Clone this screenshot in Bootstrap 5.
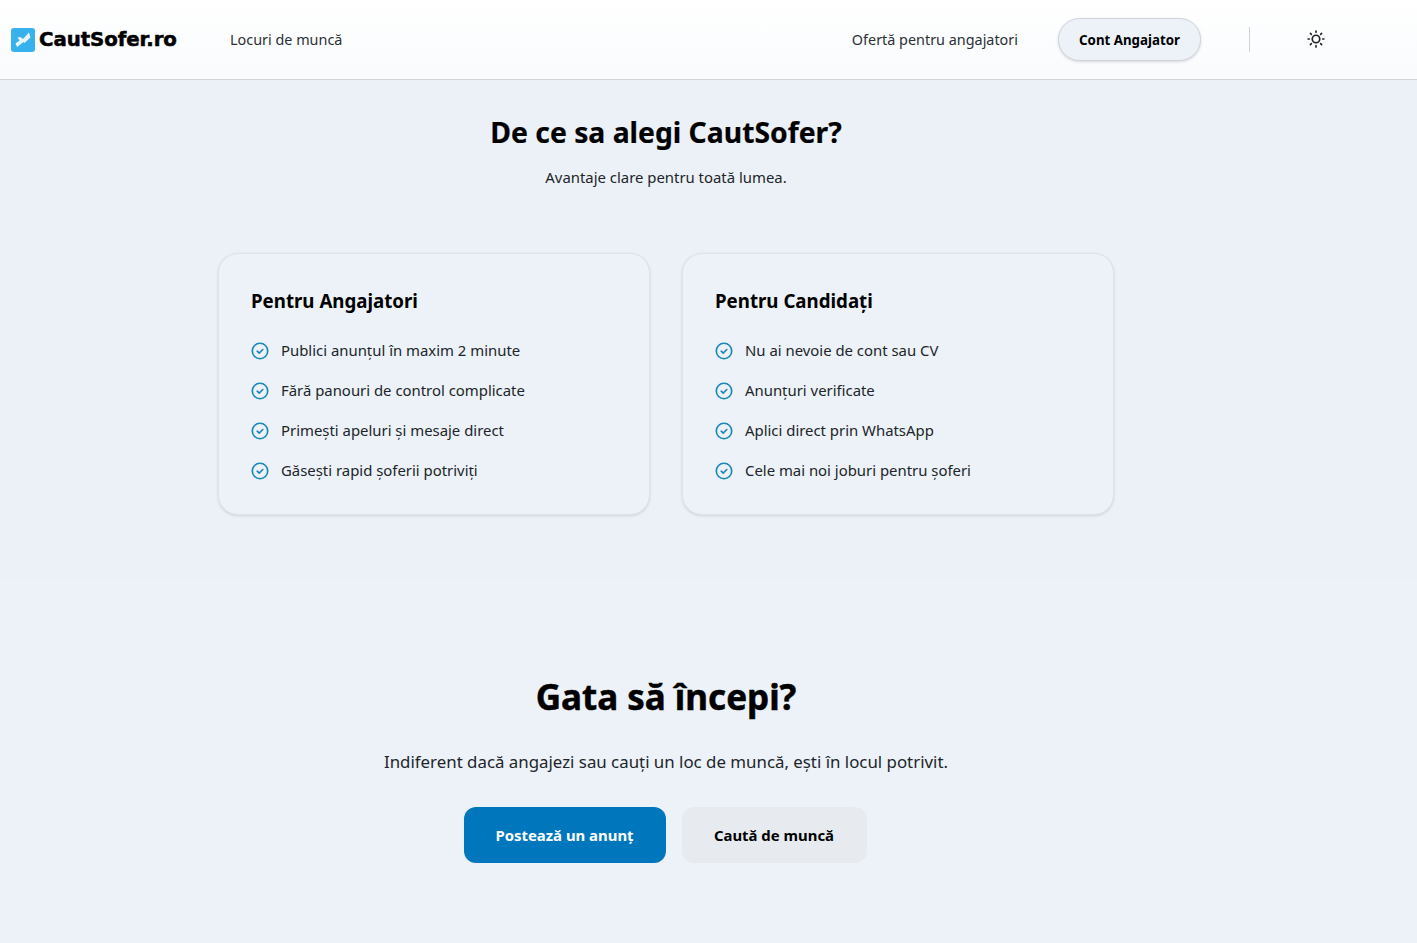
<!doctype html>
<html lang="ro">
<head>
<meta charset="utf-8">
<link href="https://cdn.jsdelivr.net/npm/bootstrap@5.3.0/dist/css/bootstrap.min.css" rel="stylesheet">
<style>
body{font-family:"Noto Sans","Open Sans",sans-serif;background:#ecf2f8;color:#212529;min-height:943px}
.top-bar{height:80px;background:linear-gradient(#fff,#f9fbfd);border-bottom:1px solid #d0d5da;padding:0 0 0 11px}
.brand-box{gap:4px;width:219px}
.brand-text{font-family:"DejaVu Sans",sans-serif;font-weight:700;font-size:19.8px;color:#000;-webkit-text-stroke:.5px #000;white-space:nowrap;letter-spacing:-.1px}
.nav-text{font-size:14.4px;color:#2b3035;text-decoration:none}
.acct-btn{width:143px;height:43px;border-radius:22px;background:#ecf2f8;border:1px solid #ced4da;box-shadow:0 1px 3px rgba(0,0,0,.15);font-size:13.3px;font-weight:700;color:#000;margin-left:40px;padding-top:3px}
.v-sep{width:1px;height:25px;background:#ced4da;margin:0 56px 0 48px}
.sun-wrap{margin-right:91px;line-height:0;margin-top:-2px}
.why-zone{height:500px;background:#ecf1f7;padding:32px 85px 0 0}
.why-title{font-size:28.3px;font-weight:700;color:#000;line-height:40px;margin:0;-webkit-text-stroke:.2px #000}
.why-sub{font-size:14.9px;line-height:21px;margin:15px 0 0;color:#212529}
.cards-row{gap:32px;margin-top:65px}
.benefit-card{width:432px;height:262px;background:#ecf2f8;border:1px solid #dfe3e8;border-radius:20px;box-shadow:0 1px 3px rgba(0,0,0,.12);padding:32px}
.benefit-title{font-size:18.7px;font-weight:700;color:#000;line-height:30px;margin:0 0 22px}
.benefit-list{gap:16px}
.benefit-item{gap:12px;height:24px;font-size:14.9px;color:#212529}
.benefit-item svg{margin-top:2px}
.cta-zone{height:363px;background:#ecf2f8;padding:94px 85px 0 0}
.cta-title{font-size:35px;font-weight:700;color:#000;line-height:46px;margin:0;-webkit-text-stroke:.5px #000}
.cta-sub{font-size:16.85px;line-height:26px;margin:29px 0 0;color:#212529}
.cta-btns{gap:16px;margin-top:32px;padding-right:2px}
.cta-main,.cta-alt{height:56px;border-radius:12px;border:0;font-size:14.9px;font-weight:700}
.cta-main{width:202px;background:#0077bd;color:#fff}
.cta-alt{width:185px;background:#e7ebf0;color:#000}
</style>
</head>
<body>
<header class="top-bar d-flex align-items-center">
  <div class="brand-box d-flex align-items-center">
    <svg width="24" height="24" viewBox="0 0 24 24"><rect width="24" height="24" rx="3" fill="#38b2ec"/><path d="M6 19l-1.500-3.500 4-3-2-3 3-.5 2.500 2 6-6.500 1.500 5-6 5.500-1-1z" fill="#e8f6fd"/></svg>
    <span class="brand-text">CautSofer.ro</span>
  </div>
  <a class="nav-text" href="#">Locuri de muncă</a>
  <a class="nav-text ms-auto" href="#">Ofertă pentru angajatori</a>
  <button class="acct-btn" type="button">Cont Angajator</button>
  <span class="v-sep"></span>
  <span class="sun-wrap">
    <svg width="20" height="20" viewBox="0 0 24 24" fill="none" stroke="#212529" stroke-width="2" stroke-linecap="round"><circle cx="12" cy="12" r="4.500"/><path d="M12 2.500v1.500M12 20v1.500M2.500 12h1.500M20 12h1.500M5.300 5.300l1.100 1.100M17.600 17.600l1.100 1.100M5.300 18.700l1.100-1.100M17.600 6.400l1.100-1.100"/></svg>
  </span>
</header>
<section class="why-zone text-center">
  <h2 class="why-title">De ce sa alegi CautSofer?</h2>
  <p class="why-sub">Avantaje clare pentru toată lumea.</p>
  <div class="cards-row d-flex justify-content-center text-start">
    <div class="benefit-card">
      <h3 class="benefit-title">Pentru Angajatori</h3>
      <div class="benefit-list d-flex flex-column">
        <div class="benefit-item d-flex align-items-center"><svg width="18" height="18" viewBox="0 0 18 18" fill="none" stroke="#1a85bd" stroke-width="1.6" stroke-linecap="round" stroke-linejoin="round"><circle cx="9" cy="9" r="7.700"/><path d="M6.200 9.200l2 1.900 3.600-3.600"/></svg>Publici anunțul în maxim 2 minute</div>
        <div class="benefit-item d-flex align-items-center"><svg width="18" height="18" viewBox="0 0 18 18" fill="none" stroke="#1a85bd" stroke-width="1.6" stroke-linecap="round" stroke-linejoin="round"><circle cx="9" cy="9" r="7.700"/><path d="M6.200 9.200l2 1.900 3.600-3.600"/></svg>Fără panouri de control complicate</div>
        <div class="benefit-item d-flex align-items-center"><svg width="18" height="18" viewBox="0 0 18 18" fill="none" stroke="#1a85bd" stroke-width="1.6" stroke-linecap="round" stroke-linejoin="round"><circle cx="9" cy="9" r="7.700"/><path d="M6.200 9.200l2 1.900 3.600-3.600"/></svg>Primești apeluri și mesaje direct</div>
        <div class="benefit-item d-flex align-items-center"><svg width="18" height="18" viewBox="0 0 18 18" fill="none" stroke="#1a85bd" stroke-width="1.6" stroke-linecap="round" stroke-linejoin="round"><circle cx="9" cy="9" r="7.700"/><path d="M6.200 9.200l2 1.900 3.600-3.600"/></svg>Găsești rapid șoferii potriviți</div>
      </div>
    </div>
    <div class="benefit-card">
      <h3 class="benefit-title">Pentru Candidați</h3>
      <div class="benefit-list d-flex flex-column">
        <div class="benefit-item d-flex align-items-center"><svg width="18" height="18" viewBox="0 0 18 18" fill="none" stroke="#1a85bd" stroke-width="1.6" stroke-linecap="round" stroke-linejoin="round"><circle cx="9" cy="9" r="7.700"/><path d="M6.200 9.200l2 1.900 3.600-3.600"/></svg>Nu ai nevoie de cont sau CV</div>
        <div class="benefit-item d-flex align-items-center"><svg width="18" height="18" viewBox="0 0 18 18" fill="none" stroke="#1a85bd" stroke-width="1.6" stroke-linecap="round" stroke-linejoin="round"><circle cx="9" cy="9" r="7.700"/><path d="M6.200 9.200l2 1.900 3.600-3.600"/></svg>Anunțuri verificate</div>
        <div class="benefit-item d-flex align-items-center"><svg width="18" height="18" viewBox="0 0 18 18" fill="none" stroke="#1a85bd" stroke-width="1.6" stroke-linecap="round" stroke-linejoin="round"><circle cx="9" cy="9" r="7.700"/><path d="M6.200 9.200l2 1.900 3.600-3.600"/></svg>Aplici direct prin WhatsApp</div>
        <div class="benefit-item d-flex align-items-center"><svg width="18" height="18" viewBox="0 0 18 18" fill="none" stroke="#1a85bd" stroke-width="1.6" stroke-linecap="round" stroke-linejoin="round"><circle cx="9" cy="9" r="7.700"/><path d="M6.200 9.200l2 1.900 3.600-3.600"/></svg>Cele mai noi joburi pentru șoferi</div>
      </div>
    </div>
  </div>
</section>
<section class="cta-zone text-center">
  <h2 class="cta-title">Gata să începi?</h2>
  <p class="cta-sub">Indiferent dacă angajezi sau cauți un loc de muncă, ești în locul potrivit.</p>
  <div class="cta-btns d-flex justify-content-center">
    <button class="cta-main" type="button">Postează un anunț</button>
    <button class="cta-alt" type="button">Caută de muncă</button>
  </div>
</section>
<script src="https://cdn.jsdelivr.net/npm/bootstrap@5.3.0/dist/js/bootstrap.bundle.min.js"></script>
</body>
</html>
